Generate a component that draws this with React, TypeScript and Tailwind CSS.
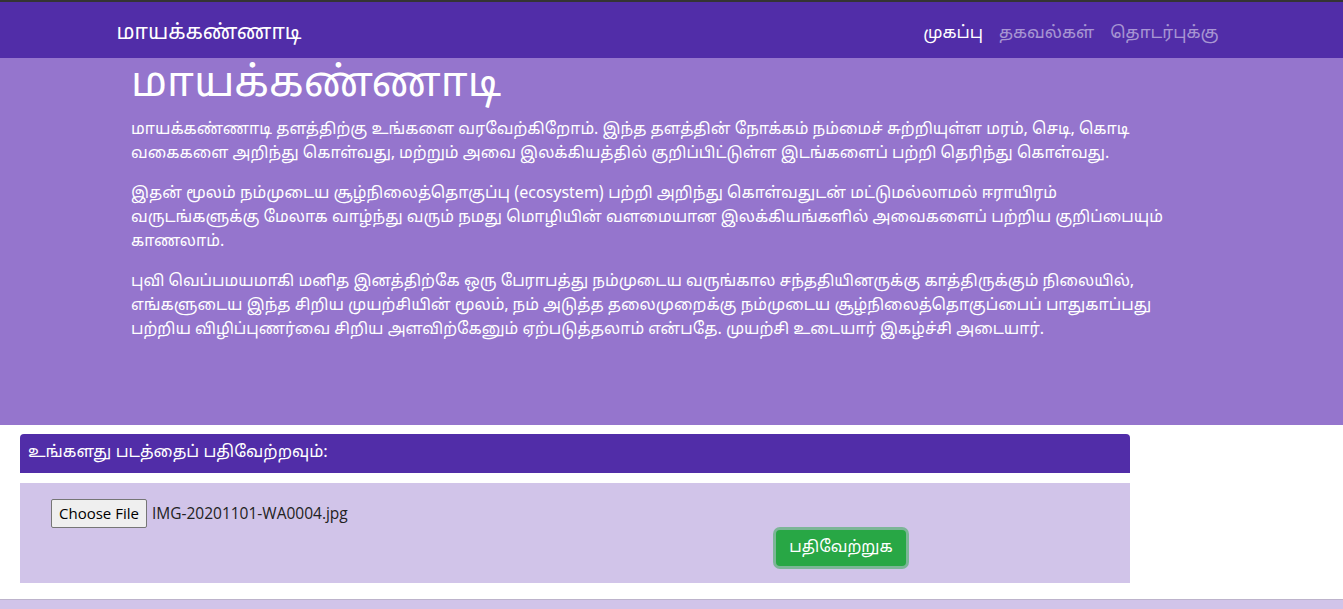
const tamil = "font-['Nirmala_UI','Noto_Sans_Tamil','Lohit_Tamil','Noto_Sans','Segoe_UI',sans-serif]";

const navLinks = [
  { label: 'முகப்பு', active: true },
  { label: 'தகவல்கள்', active: false },
  { label: 'தொடர்புக்கு', active: false },
];

const paragraphs = [
  'மாயக்கண்ணாடி தளத்திற்கு உங்களை வரவேற்கிறோம். இந்த தளத்தின் நோக்கம் நம்மைச் சுற்றியுள்ள மரம், செடி, கொடி வகைகளை அறிந்து கொள்வது, மற்றும் அவை இலக்கியத்தில் குறிப்பிட்டுள்ள இடங்களைப் பற்றி தெரிந்து கொள்வது.',
  'இதன் மூலம் நம்முடைய சூழ்நிலைத்தொகுப்பு (ecosystem) பற்றி அறிந்து கொள்வதுடன் மட்டுமல்லாமல் ஈராயிரம் வருடங்களுக்கு மேலாக வாழ்ந்து வரும் நமது மொழியின் வளமையான இலக்கியங்களில் அவைகளைப் பற்றிய குறிப்பையும் காணலாம்.',
  'புவி வெப்பமயமாகி மனித இனத்திற்கே ஒரு பேராபத்து நம்முடைய வருங்கால சந்ததியினருக்கு காத்திருக்கும் நிலையில், எங்களுடைய இந்த சிறிய முயற்சியின் மூலம், நம் அடுத்த தலைமுறைக்கு நம்முடைய சூழ்நிலைத்தொகுப்பைப் பாதுகாப்பது பற்றிய விழிப்புணர்வை சிறிய அளவிற்கேனும் ஏற்படுத்தலாம் என்பதே. முயற்சி உடையார் இகழ்ச்சி அடையார்.',
];

export default function App() {
  return (
    <div className={`min-h-screen bg-white text-white ${tamil}`}>
      {/* Navbar */}
      <nav className="border-t-2 border-[#343434] bg-[#512da8] h-[58px]">
        <div className="mx-auto flex h-full w-[1140px] items-center justify-between px-[15px] pt-2">
          <span className="text-[21px] leading-none">மாயக்கண்ணாடி</span>
          <ul className="flex items-center gap-4 pr-2 text-[17px]">
            {navLinks.map((link) => (
              <li key={link.label} className={link.active ? 'text-white' : 'text-white/50'}>
                {link.label}
              </li>
            ))}
          </ul>
        </div>
      </nav>

      {/* Jumbotron */}
      <section className="bg-[#9575cd] pt-1 pb-[67px]">
        <div className="ml-[131px] w-[1050px]">
          <h1 className="mb-2 text-[42px] leading-[48px] font-normal">மாயக்கண்ணாடி</h1>
          {paragraphs.map((text, i) => (
            <p key={i} className="mb-4 text-[16px] leading-6">
              {text}
            </p>
          ))}
        </div>
      </section>

      {/* Upload card */}
      <div className="pt-[9px] pl-5">
        <div className="w-[1110px]">
          <div className="flex h-[39px] items-center rounded-t bg-[#512da8] px-[8px] text-[16.5px]">
            உங்களது படத்தைப் பதிவேற்றவும்:
          </div>
          <div className="mt-[10px] h-[100px] bg-[#d1c4e9] pt-4 pl-[31px]">
            <div className="flex items-center gap-[5px] font-['Segoe_UI','Open_Sans',sans-serif] text-[15px] text-[#222]">
              <button className="h-[29px] rounded-[2px] border border-[#767676] bg-[#efefef] px-[7px] text-[15px] text-black">
                Choose File
              </button>
              <span className="text-[15.5px]">IMG-20201101-WA0004.jpg</span>
            </div>
            <div className="ml-[725px] mt-[2px]">
              <button className="h-[36px] w-[130px] rounded-[4px] bg-[#28a745] text-[16px] text-white ring-[3px] ring-[#28a745]/50 outline-none">
                பதிவேற்றுக
              </button>
            </div>
          </div>
        </div>
      </div>

      {/* Footer strip */}
      <div className="mt-4 h-[40px] border-t border-[#bdb3cc] bg-[#d1c4e9]" />
    </div>
  );
}
